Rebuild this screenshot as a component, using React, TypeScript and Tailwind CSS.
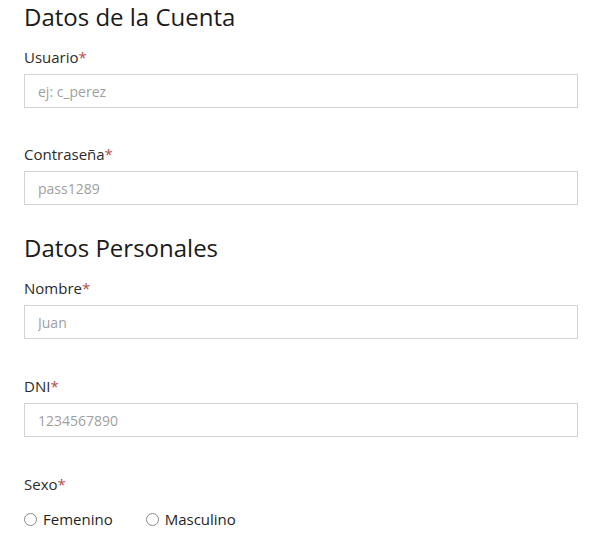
const font = { fontFamily: '"Open Sans", "Liberation Sans", sans-serif' };

function Field({ label, placeholder }: { label: string; placeholder: string }) {
  return (
    <div>
      <label className="block text-[15px] font-medium leading-5 text-[#2b2b2b]">
        {label}
        <span className="text-[#b94a48]">*</span>
      </label>
      <input
        type="text"
        placeholder={placeholder}
        className="mt-[7px] block h-[34px] w-full border border-[#d3d3d3] bg-white px-[13px] text-sm text-[#333] placeholder:text-[#a0a0a0] outline-none"
      />
    </div>
  );
}

function Radio({ label }: { label: string }) {
  return (
    <label className="flex items-center gap-[6px] text-[15px] font-medium leading-5 text-[#1f1f1f]">
      <span className="h-[13px] w-[13px] rounded-full border border-[#8a8a8a] bg-white" />
      {label}
    </label>
  );
}

export default function App() {
  return (
    <div className="min-h-[542px] bg-white pl-6 pr-[14px]" style={font}>
      <h2 className="text-2xl leading-[33px] text-[#1a1a1a]">Datos de la Cuenta</h2>
      <div className="mt-[14px] space-y-[36px]">
        <Field label="Usuario" placeholder="ej: c_perez" />
        <Field label="Contraseña" placeholder="pass1289" />
      </div>
      <h2 className="mt-[26px] text-2xl leading-[33px] text-[#1a1a1a]">Datos Personales</h2>
      <div className="mt-[14px] space-y-[37px]">
        <Field label="Nombre" placeholder="Juan" />
        <Field label="DNI" placeholder="1234567890" />
        <div>
          <div className="text-[15px] font-medium leading-5 text-[#2b2b2b]">
            Sexo<span className="text-[#b94a48]">*</span>
          </div>
          <div className="mt-[15px] flex gap-[33px]">
            <Radio label="Femenino" />
            <Radio label="Masculino" />
          </div>
        </div>
      </div>
    </div>
  );
}
